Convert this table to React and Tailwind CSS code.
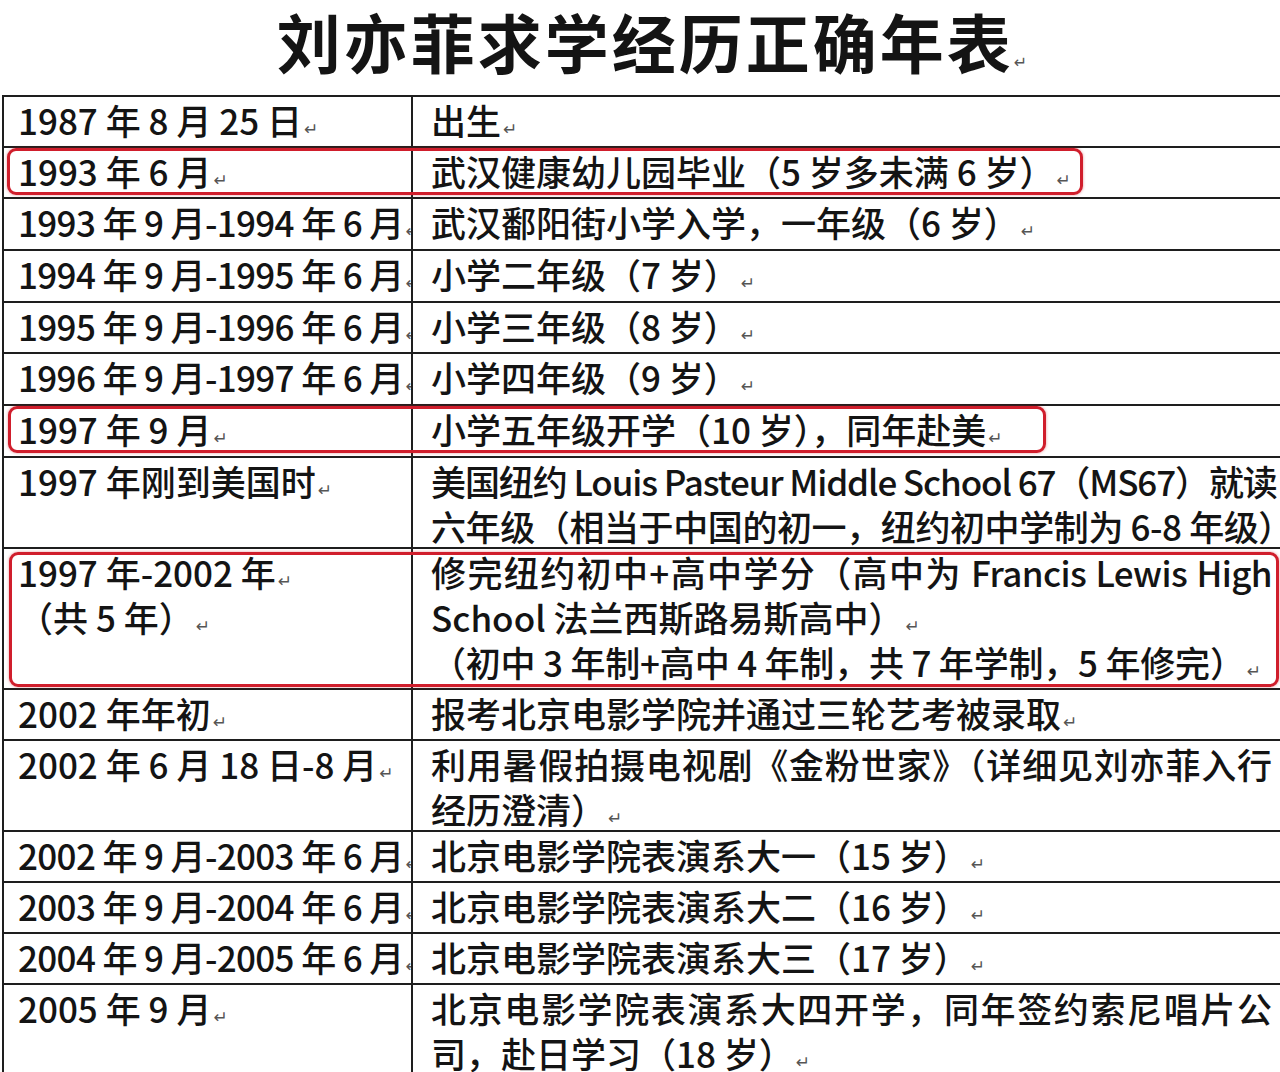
import React from "react";

const FONT = { fontFamily: '"Noto Sans CJK SC", "Noto Sans", sans-serif' };

function Mark() {
  return (
    <span
      className="inline-block text-[17px] leading-none text-[#555] align-baseline ml-[2px] font-normal tracking-normal"
      style={{ fontFamily: '"DejaVu Sans", sans-serif' }}
    >
      ↵
    </span>
  );
}

// line: { t: text, m: mark?, j: "word" | "char", n: narrow class }
function Line({ t, m, j, n = "" }) {
  let cls = "whitespace-nowrap " + n;
  if (j === "word") cls += " text-justify [text-align-last:justify] [text-justify:inter-word] pr-[8px]";
  if (j === "char") cls += " text-justify [text-align-last:justify] pr-[8px]";
  return (
    <div className={cls}>
      {t}
      {m ? <Mark /> : null}
    </div>
  );
}

const NR = "tracking-[-0.65px]";

const rows = [
  { h: "h-[51px]", l: [{ t: "1987 年 8 月 25 日", m: 1 }], r: [{ t: "出生", m: 1 }] },
  { h: "h-[51px]", l: [{ t: "1993 年 6 月", m: 1 }], r: [{ t: "武汉健康幼儿园毕业（5 岁多未满 6 岁）", m: 1 }], box: 1 },
  { h: "h-[52px]", l: [{ t: "1993 年 9 月-1994 年 6 月", m: 1, n: NR }], r: [{ t: "武汉鄱阳街小学入学，一年级（6 岁）", m: 1 }] },
  { h: "h-[52px]", l: [{ t: "1994 年 9 月-1995 年 6 月", m: 1, n: NR }], r: [{ t: "小学二年级（7 岁）", m: 1 }] },
  { h: "h-[51px]", l: [{ t: "1995 年 9 月-1996 年 6 月", m: 1, n: NR }], r: [{ t: "小学三年级（8 岁）", m: 1 }] },
  { h: "h-[52px]", l: [{ t: "1996 年 9 月-1997 年 6 月", m: 1, n: NR }], r: [{ t: "小学四年级（9 岁）", m: 1 }] },
  { h: "h-[52px]", l: [{ t: "1997 年 9 月", m: 1 }], r: [{ t: "小学五年级开学（10 岁），同年赴美", m: 1 }], box: 2 },
  {
    h: "h-[91px]",
    l: [{ t: "1997 年刚到美国时", m: 1 }],
    r: [
      { t: "美国纽约 Louis Pasteur Middle School 67（MS67）就读", j: "word", n: "tracking-[-1.1px]" },
      { t: "六年级（相当于中国的初一，纽约初中学制为 6-8 年级）", m: 1, n: "tracking-[-0.4px]" },
    ],
  },
  {
    h: "h-[141px]",
    l: [
      { t: "1997 年-2002 年", m: 1 },
      { t: "（共 5 年）", m: 1 },
    ],
    r: [
      { t: "修完纽约初中+高中学分（高中为 Francis Lewis High", j: "word", n: "tracking-[-0.6px]" },
      { t: "School 法兰西斯路易斯高中）", m: 1 },
      { t: "（初中 3 年制+高中 4 年制，共 7 年学制，5 年修完）", m: 1, n: "tracking-[-0.2px]" },
    ],
    box: 3,
  },
  { h: "h-[51px]", l: [{ t: "2002 年年初", m: 1 }], r: [{ t: "报考北京电影学院并通过三轮艺考被录取", m: 1 }] },
  {
    h: "h-[91px]",
    l: [{ t: "2002 年 6 月 18 日-8 月", m: 1 }],
    r: [
      { t: "利用暑假拍摄电视剧《金粉世家》（详细见刘亦菲入行", j: "char" },
      { t: "经历澄清）", m: 1 },
    ],
  },
  { h: "h-[51px]", l: [{ t: "2002 年 9 月-2003 年 6 月", m: 1, n: NR }], r: [{ t: "北京电影学院表演系大一（15 岁）", m: 1 }] },
  { h: "h-[51px]", l: [{ t: "2003 年 9 月-2004 年 6 月", m: 1, n: NR }], r: [{ t: "北京电影学院表演系大二（16 岁）", m: 1 }] },
  { h: "h-[51px]", l: [{ t: "2004 年 9 月-2005 年 6 月", m: 1, n: NR }], r: [{ t: "北京电影学院表演系大三（17 岁）", m: 1 }] },
  {
    h: "h-[110px]",
    l: [{ t: "2005 年 9 月", m: 1 }],
    r: [
      { t: "北京电影学院表演系大四开学，同年签约索尼唱片公", j: "char" },
      { t: "司，赴日学习（18 岁）", m: 1 },
    ],
  },
];

function RedBox({ kind }) {
  const base =
    "absolute pointer-events-none border-[3px] border-[#d01e2c] rounded-[9px] shadow-[0_0_3px_rgba(200,20,30,0.45)]";
  if (kind === 1) return <div className={base + " left-[3px] top-[0px] w-[1076px] h-[47px]"} />;
  if (kind === 2) return <div className={base + " left-[4px] top-[0px] w-[1038px] h-[47px]"} />;
  return <div className={base + " left-[5px] top-[3px] w-[1270px] h-[135px]"} />;
}

export default function App() {
  return (
    <div className="w-[1280px] h-[1072px] overflow-hidden bg-white text-[#141414]" style={FONT}>
      <div className="h-[95px] flex justify-center pl-[24px] pt-[2px]">
        <div className="text-[64px] leading-[76px] font-semibold tracking-[3px] whitespace-nowrap">
          刘亦菲求学经历正确年表
          <span
            className="text-[16px] text-[#555] tracking-normal font-normal align-baseline"
            style={{ fontFamily: '"DejaVu Sans", sans-serif' }}
          >
            ↵
          </span>
        </div>
      </div>
      <div className="ml-[2px] w-[1300px] border-t-2 border-l-2 border-[#1e1e1e]">
        {rows.map((row, i) => (
          <div key={i} className={"relative flex border-b-2 border-[#1e1e1e] " + row.h}>
            <div className="w-[409px] shrink-0 border-r-2 border-[#1e1e1e] overflow-hidden pl-[14px] text-[35px] leading-[45px] font-medium">
              {row.l.map((ln, k) => (
                <Line key={k} {...ln} />
              ))}
            </div>
            <div className="w-[867px] shrink-0 overflow-hidden pl-[18px] text-[35px] leading-[45px] font-medium">
              {row.r.map((ln, k) => (
                <Line key={k} {...ln} />
              ))}
            </div>
            {row.box ? <RedBox kind={row.box} /> : null}
          </div>
        ))}
      </div>
    </div>
  );
}
